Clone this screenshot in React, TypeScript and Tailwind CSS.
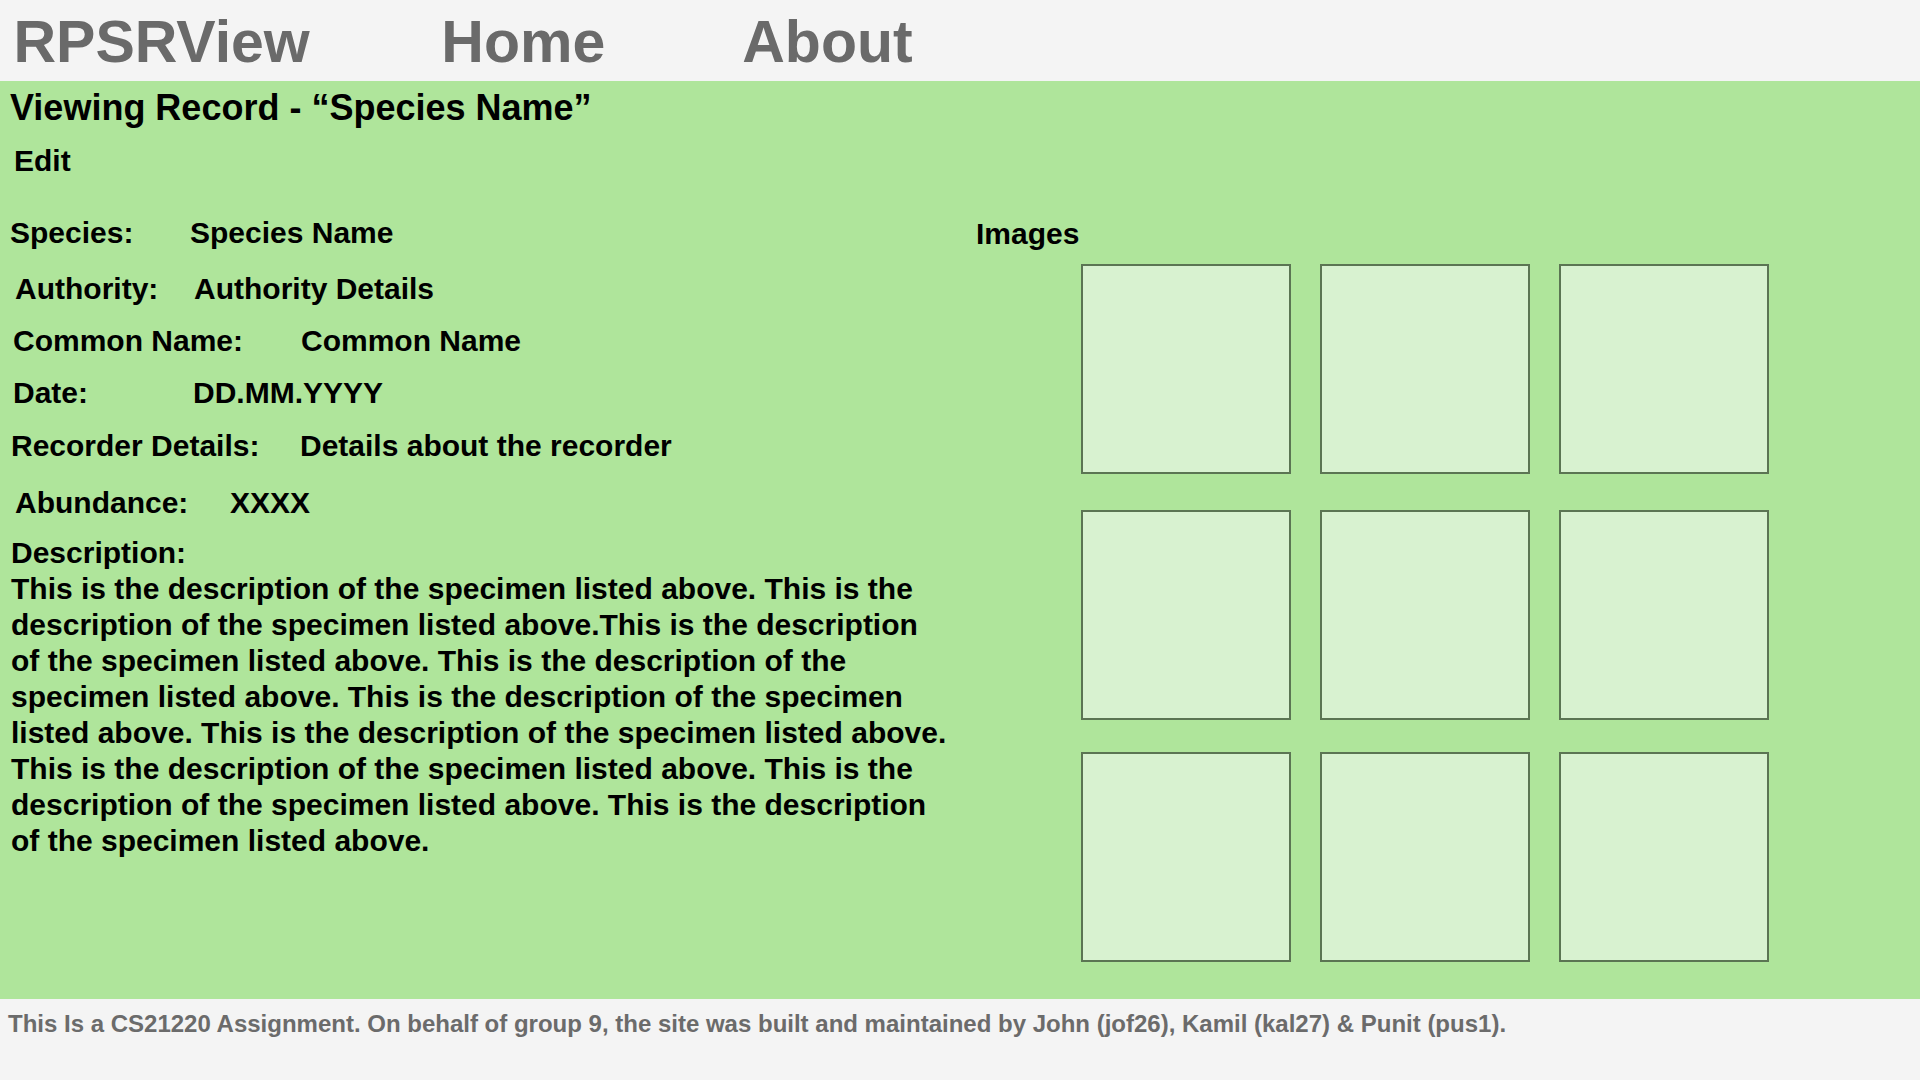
import React from "react";

const fields = [
  { label: "Species:", value: "Species Name", row: "mt-[36px] pl-[10px]", w: "w-[180px]" },
  { label: "Authority:", value: "Authority Details", row: "mt-[20px] pl-[15px]", w: "w-[179px]" },
  { label: "Common Name:", value: "Common Name", row: "mt-[16px] pl-[13px]", w: "w-[288px]" },
  { label: "Date:", value: "DD.MM.YYYY", row: "mt-[16px] pl-[13px]", w: "w-[180px]" },
  { label: "Recorder Details:", value: "Details about the recorder", row: "mt-[17px] pl-[11px]", w: "w-[289px]" },
  { label: "Abundance:", value: "XXXX", row: "mt-[21px] pl-[15px]", w: "w-[215px]" },
];

const description =
  "This is the description of the specimen listed above. This is the description of the specimen listed above.This is the description of the specimen listed above. This is the description of the specimen listed above. This is the description of the specimen listed above. This is the description of the specimen listed above. This is the description of the specimen listed above. This is the description of the specimen listed above. This is the description of the specimen listed above.";

function ImageBox() {
  return <div className="w-[210px] h-[210px] bg-[#d8f2d0] border-2 border-[#5b7553]" />;
}

export default function App() {
  return (
    <div className="w-[1920px] h-[1080px] flex flex-col font-['Liberation_Sans',Arial,sans-serif] font-bold overflow-hidden">
      {/* top nav */}
      <header className="h-[81px] shrink-0 bg-[#f4f4f4] flex pt-[3px] text-[59px] leading-[78px] text-[#6a6a6a]">
        <span className="ml-[13.5px]">RPSRView</span>
        <span className="ml-[131.6px]">Home</span>
        <span className="ml-[137px]">About</span>
      </header>

      <main className="h-[918px] shrink-0 bg-[#afe59b] flex text-black">
        {/* record details */}
        <div className="w-[976px] shrink-0 flex flex-col">
          <h1 className="mt-[4.5px] ml-[10px] text-[36px] leading-[44px]">Viewing Record - “Species Name”</h1>
          <div className="mt-[13px] ml-[14px] text-[30px] leading-[36px]">Edit</div>

          {fields.map((f) => (
            <div key={f.label} className={`flex text-[30px] leading-[36px] ${f.row}`}>
              <span className={`${f.w} shrink-0`}>{f.label}</span>
              <span>{f.value}</span>
            </div>
          ))}

          <div className="mt-[14px] ml-[11px] w-[940px] text-[30px] leading-[36px]">
            <div>Description:</div>
            <p>{description}</p>
          </div>
        </div>

        {/* images */}
        <div className="flex flex-col">
          <div className="mt-[134.6px] text-[30px] leading-[36px]">Images</div>
          <div className="ml-[105px] mt-[12.7px] flex flex-col">
            <div className="flex gap-[29px]">
              <ImageBox />
              <ImageBox />
              <ImageBox />
            </div>
            <div className="flex gap-[29px] mt-[36px]">
              <ImageBox />
              <ImageBox />
              <ImageBox />
            </div>
            <div className="flex gap-[29px] mt-[32px]">
              <ImageBox />
              <ImageBox />
              <ImageBox />
            </div>
          </div>
        </div>
      </main>

      <footer className="flex-1 bg-[#f4f4f4] pl-[8px] pt-[11px] text-[24px] leading-[28px] text-[#6b6b6b]">
        This Is a CS21220 Assignment. On behalf of group 9, the site was built and maintained by John (jof26), Kamil (kal27) &amp; Punit (pus1).
      </footer>
    </div>
  );
}
